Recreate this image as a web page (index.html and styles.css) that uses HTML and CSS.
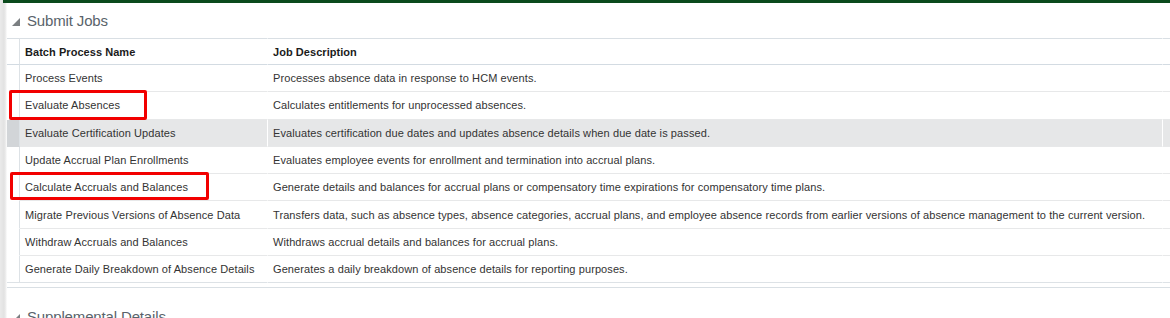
FILE: index.html
```html
<!DOCTYPE html>
<html lang="en">
<head>
<meta charset="utf-8">
<title>Submit Jobs</title>
<link rel="stylesheet" href="styles.css">
</head>
<body>
<div class="page">
  <div class="topbar"></div>
  <div class="panel">
    <div class="section-head">
      <svg class="disclose" width="8" height="8" viewBox="0 0 8 8"><polygon points="8,0 8,8 0,8" fill="#7b7f82"/></svg>
      <h2 class="section-title">Submit Jobs</h2>
    </div>
    <table class="jobs">
      <thead>
        <tr>
          <th class="gutter"></th>
          <th class="name">Batch Process Name</th>
          <th class="desc">Job Description</th>
          <th class="filler"></th>
        </tr>
      </thead>
      <tbody>
        <tr>
          <td class="gutter"></td>
          <td class="name">Process Events</td>
          <td class="desc">Processes absence data in response to HCM events.</td>
          <td class="filler"></td>
        </tr>
        <tr>
          <td class="gutter"></td>
          <td class="name"><span class="mark mark-a"></span>Evaluate Absences</td>
          <td class="desc">Calculates entitlements for unprocessed absences.</td>
          <td class="filler"></td>
        </tr>
        <tr class="selected">
          <td class="gutter"></td>
          <td class="name">Evaluate Certification Updates</td>
          <td class="desc">Evaluates certification due dates and updates absence details when due date is passed.</td>
          <td class="filler"></td>
        </tr>
        <tr>
          <td class="gutter"></td>
          <td class="name">Update Accrual Plan Enrollments</td>
          <td class="desc">Evaluates employee events for enrollment and termination into accrual plans.</td>
          <td class="filler"></td>
        </tr>
        <tr>
          <td class="gutter"></td>
          <td class="name"><span class="mark mark-b"></span>Calculate Accruals and Balances</td>
          <td class="desc">Generate details and balances for accrual plans or compensatory time expirations for compensatory time plans.</td>
          <td class="filler"></td>
        </tr>
        <tr>
          <td class="gutter"></td>
          <td class="name">Migrate Previous Versions of Absence Data</td>
          <td class="desc">Transfers data, such as absence types, absence categories, accrual plans, and employee absence records from earlier versions of absence management to the current version.</td>
          <td class="filler"></td>
        </tr>
        <tr>
          <td class="gutter"></td>
          <td class="name">Withdraw Accruals and Balances</td>
          <td class="desc">Withdraws accrual details and balances for accrual plans.</td>
          <td class="filler"></td>
        </tr>
        <tr class="last">
          <td class="gutter"></td>
          <td class="name">Generate Daily Breakdown of Absence Details</td>
          <td class="desc">Generates a daily breakdown of absence details for reporting purposes.</td>
          <td class="filler"></td>
        </tr>
      </tbody>
    </table>
    <div class="table-foot"></div>
    <div class="section-head next">
      <svg class="disclose" width="8" height="8" viewBox="0 0 8 8"><polygon points="8,0 8,8 0,8" fill="#7b7f82"/></svg>
      <h2 class="section-title">Supplemental Details</h2>
    </div>
  </div>
</div>
</body>
</html>
```

FILE: styles.css
```css
html, body {
  margin: 0;
  padding: 0;
  background: #ffffff;
  overflow: hidden;
}

.page {
  width: 1170px;
  height: 318px;
  overflow: hidden;
  background: linear-gradient(to right, #eaeaea 0, #e2e2e2 4px, #f0f0f0 6px, #ffffff 7px);
  font-family: "Liberation Sans", Arial, sans-serif;
}

.topbar {
  height: 3px;
  margin-left: 3px;
  background: #0b4a1d;
}

.panel {
  padding-left: 7px;
}

.section-head {
  display: flex;
  align-items: center;
  height: 35px;
  padding-left: 5px;
  gap: 7px;
}

.section-head.next {
  margin-top: 11px;
}

.disclose {
  display: block;
  margin-top: 2px;
}

.section-title {
  margin: 0;
  font-size: 15px;
  font-weight: normal;
  color: #59636a;
  letter-spacing: -0.15px;
}

.jobs {
  width: 1163px;
  border-collapse: separate;
  border-spacing: 0;
  table-layout: fixed;
  font-size: 11px;
  color: #333333;
  letter-spacing: 0.09px;
}

.jobs th,
.jobs td {
  padding: 0;
  text-align: left;
  white-space: nowrap;
  vertical-align: middle;
}

.jobs th {
  height: 25px;
  font-weight: bold;
  color: #1b1b1b;
  letter-spacing: 0.05px;
  border-top: 1px solid #d9dfe4;
  border-bottom: 1px solid #d3dbe2;
}

.jobs td {
  height: 26.3px;
  border-bottom: 1px solid #e7e8e9;
}

.jobs .gutter {
  width: 12px;
  border-right: 1px solid #dde2e6;
}

.jobs td.gutter {
  border-bottom-color: transparent;
}

.jobs .name {
  width: 242px;
  padding-left: 5px;
  position: relative;
}

.jobs .desc {
  width: 889px;
  padding-left: 5px;
  border-left: 1px solid #ffffff;
}

.jobs .filler {
  width: 7px;
  border-left: 1px solid #ffffff;
}

.jobs tr.selected td {
  background: #e6e7e8;
}

.jobs tr.selected td.gutter {
  background: #d2d5d8;
}

.jobs tr.last td,
.jobs tr.last td.gutter {
  border-bottom-color: #dde2e6;
}

.table-foot {
  height: 4px;
  border-bottom: 1px solid #d9dfe4;
}

/* red outlines drawn over highlighted process names */
.mark {
  position: absolute;
  border: 3px solid #f20000;
  border-radius: 2px;
  box-sizing: border-box;
  pointer-events: none;
}

.mark-a {
  left: -11px;
  top: -2px;
  width: 138px;
  height: 30px;
}

.mark-b {
  left: -10px;
  top: -2px;
  width: 199px;
  height: 28px;
}
```
